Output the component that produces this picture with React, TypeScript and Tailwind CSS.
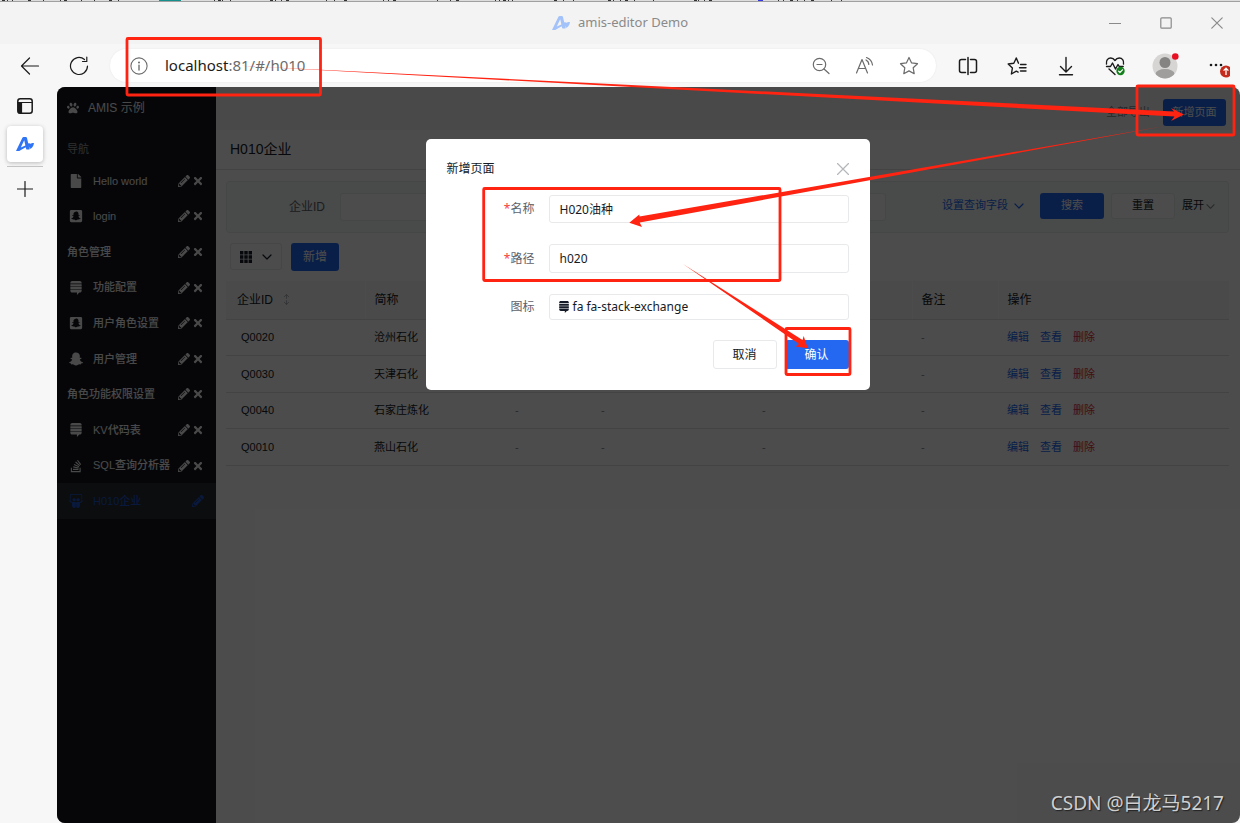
import React from 'react';
import {
  FaPaw,
  FaFile,
  FaSnapchatSquare,
  FaSnapchatGhost,
  FaStackExchange,
  FaStackOverflow,
  FaSlideshare,
  FaPencilAlt,
  FaTimes,
} from 'react-icons/fa';

const UI_FONT = "font-['Noto_Sans','Noto_Sans_CJK_SC',sans-serif]";
const PAGE_FONT = "font-['Liberation_Sans','Noto_Sans_CJK_SC',sans-serif]";

type NavItem = { label: string; icon?: React.ComponentType<{ className?: string }>; active?: boolean };

const NAV: NavItem[] = [
  { label: 'Hello world', icon: FaFile },
  { label: 'login', icon: FaSnapchatSquare },
  { label: '角色管理' },
  { label: '功能配置', icon: FaStackExchange },
  { label: '用户角色设置', icon: FaSnapchatSquare },
  { label: '用户管理', icon: FaSnapchatGhost },
  { label: '角色功能权限设置' },
  { label: 'KV代码表', icon: FaStackExchange },
  { label: 'SQL查询分析器', icon: FaStackOverflow },
  { label: 'H010企业', icon: FaSlideshare, active: true },
];

const ROWS = [
  ['Q0020', '沧州石化'],
  ['Q0030', '天津石化'],
  ['Q0040', '石家庄炼化'],
  ['Q0010', '燕山石化'],
];

const STRIP = [
  2, 7, 12, 28, 43, 60, 64, 81, 94, 109, 118, 214, 218, 222, 230, 270, 275, 281, 286, 326, 334, 344, 383, 388, 393,
  437, 450, 456, 495, 499, 503, 508, 512, 554, 563, 573, 608, 613, 620, 625, 634, 653, 694, 698, 704, 709, 778, 783,
  790, 797, 804, 811, 831, 841,
];

function Logo({ className }: { className?: string }) {
  return (
    <svg viewBox="0 0 18 15" className={className} fill="currentColor" aria-hidden="true">
      <path
        fillRule="evenodd"
        d="M0 14 6.400.8C6.700.2 7.100 0 7.700 0h2.100c.7 0 1 .3 1.200.9L13.600 12.500h-3.200l-.7-2.200L3.200 14H0Zm8.200-10.800L4.800 10.500l4.600-2.100-1.200-5.200Z"
      />
      <path d="M10.800 7.800c1.200-1.800 2.600-2 3.800-1C15.800 5.800 17 5.800 18 6.300c-.5 3-2 5-4.300 5.700-.2-2-1.200-3.300-2.900-4.200Z" />
    </svg>
  );
}

function Line({ children, className, w = 20 }: { children: React.ReactNode; className?: string; w?: number }) {
  return (
    <svg
      viewBox={`0 0 ${w} ${w}`}
      className={className}
      fill="none"
      stroke="currentColor"
      strokeWidth="1.2"
      strokeLinecap="round"
      strokeLinejoin="round"
      aria-hidden="true"
    >
      {children}
    </svg>
  );
}

function Chevron({ className }: { className?: string }) {
  return (
    <Line w={10} className={className}>
      <path d="m1 3 4 4 4-4" />
    </Line>
  );
}

const STAR = 'm10 1.500 2.600 5.400 5.900.8-4.300 4.100 1 5.900L10 14.900l-5.200 2.800 1-5.900L1.500 7.700l5.900-.8Z';

function TitleBar() {
  return (
    <header className="grid h-[42px] shrink-0 grid-cols-[1fr_auto_1fr] items-center bg-[#f3f3f3]">
      <span />
      <div className="flex items-center gap-2 text-[13px] text-[#8a8a8a]">
        <Logo className="w-[18px] text-[#a3c2fa]" />
        <h1>amis-editor Demo</h1>
      </div>
      <div className="flex justify-end gap-[5px] text-[#8a8a8a]">
        <button aria-label="最小化" className="flex w-[46px] justify-center">
          <Line w={12} className="size-3"><path d="M.5 6.500h11" /></Line>
        </button>
        <button aria-label="最大化" className="flex w-[46px] justify-center">
          <Line w={12} className="size-3"><rect x=".8" y=".8" width="10.400" height="10.400" rx="1" /></Line>
        </button>
        <button aria-label="关闭" className="flex w-[46px] justify-center">
          <Line w={12} className="size-3"><path d="m.8.8 10.400 10.400M11.200.8.8 11.200" /></Line>
        </button>
      </div>
    </header>
  );
}

function Toolbar() {
  return (
    <div className="flex h-[43px] shrink-0 items-center bg-[#f7f7f7] text-[#1b1b1b]">
      <div className="flex w-[110px] items-center gap-[29px] pl-5">
        <button aria-label="后退">
          <Line className="size-5"><path d="M18.500 10H1.500M9.500 2 1.500 10l8 8" /></Line>
        </button>
        <button aria-label="刷新">
          <Line className="size-5"><path d="M18.500 10A8.500 8.500 0 1 1 15.500 3.500M17.800 1.200v4.300h-4.300" /></Line>
        </button>
      </div>
      <div className="flex h-[33px] flex-1 items-center rounded-full bg-white pr-[17px] pl-5 text-[#6b6b6b] shadow-[0_0_2px_rgba(0,0,0,0.08)]">
        <Line className="size-[18px]">
          <circle cx="10" cy="10" r="9" />
          <path d="M10 9v5.500" strokeWidth="1.500" />
          <circle cx="10" cy="6" r=".5" fill="currentColor" />
        </Line>
        <div className="flex-1 pl-[17px] text-[15px]">
          <span className="text-[#1b1b1b]">localhost</span>:81/#/h010
        </div>
        <div className="flex gap-6">
          <button aria-label="缩小">
            <Line className="size-5"><circle cx="8.500" cy="8.500" r="6.200" /><path d="M6 8.500h5M13 13l5 4.500" /></Line>
          </button>
          <button aria-label="朗读">
            <Line className="size-5">
              <path d="M1.500 17 7 3.500 12.500 17M3.500 12.500h7M11 4c1.800 1 2.800 2.500 2.800 4.500M11.500 1.500C15 2.800 17 5 17.500 9" />
            </Line>
          </button>
          <button aria-label="收藏">
            <Line className="size-5"><path d={STAR} /></Line>
          </button>
        </div>
      </div>
      <div className="ml-[7px] flex">
        <button aria-label="分屏" className="flex w-[49px] items-center justify-center">
          <Line className="size-5">
            <path d="M7.500 3.500h-4C2.500 3.500 1.500 4.500 1.500 5.500v9c0 1 1 2 2 2h4M12.500 3.500h4c1 0 2 1 2 2v9c0 1-1 2-2 2h-4M10 1.500v17" strokeWidth="1.500" />
          </Line>
        </button>
        <button aria-label="收藏夹" className="flex w-[49px] items-center justify-center">
          <Line className="size-5">
            <path d="M11.500 7.200 9.300 2 6.800 7.200 1.200 8l4.200 4-1 6 4.900-2.800 1.800.9M13.500 8.500h5.500M12.500 11.800H19M13.500 15h5.500" strokeWidth="1.400" />
          </Line>
        </button>
        <button aria-label="下载" className="flex w-[49px] items-center justify-center">
          <Line className="size-5"><path d="M10 1.500v14M4.500 10.500l5.500 5.500 5.500-5.500M3.500 18.800h13" strokeWidth="1.400" /></Line>
        </button>
        <button aria-label="浏览器概要" className="flex w-[49px] items-center justify-center">
          <Line className="size-5">
            <path d="M1.500 8C.8 4.500 3 2 5.700 2 7.600 2 9 3 10 4.500 11 3 12.400 2 14.300 2 17 2 19.200 4.500 18.500 8M1.500 10.500h4L7.500 7l3 6L13 8.500l1.200 2h4M4 13l6 5.500" strokeWidth="1.400" />
            <circle cx="15.500" cy="15" r="4.200" fill="#13801c" stroke="none" />
            <path d="m13.600 15.200 1.300 1.300 2.600-2.700" stroke="#fff" />
          </Line>
        </button>
        <button aria-label="个人资料" className="flex w-[52px] items-center justify-center">
          <svg viewBox="0 0 28 28" className="size-7" aria-hidden="true">
            <clipPath id="face"><circle cx="14" cy="14" r="12.500" /></clipPath>
            <circle cx="14" cy="14" r="12.500" fill="#d7d5d3" />
            <circle cx="14" cy="10.500" r="5.500" fill="#858482" />
            <ellipse cx="14" cy="22" rx="9.500" ry="5" fill="#a09e9c" clipPath="url(#face)" />
            <circle cx="24.300" cy="4.500" r="3.300" fill="#e81123" />
          </svg>
        </button>
        <button aria-label="更多" className="flex w-[49px] items-center justify-center">
          <svg viewBox="0 0 28 24" className="h-6 w-7" aria-hidden="true">
            <g fill="#1b1b1b"><circle cx="9" cy="11" r="1.300" /><circle cx="14" cy="11" r="1.300" /><circle cx="19" cy="11" r="1.300" /></g>
            <circle cx="24" cy="17.500" r="6" fill="#c42b1c" />
            <path d="M24 21v-6.500M21.600 16.600l2.400-2.400 2.400 2.400" fill="none" stroke="#fff" strokeWidth="1.300" />
          </svg>
        </button>
      </div>
    </div>
  );
}

function Rail() {
  return (
    <aside className="flex w-[57px] shrink-0 flex-col items-start bg-[#f7f7f7] pt-[11px] pl-[7px] text-[#1b1b1b]">
      <button aria-label="标签页" className="flex w-9 justify-center">
        <Line w={16} className="size-4">
          <rect x=".8" y=".8" width="14.400" height="14.400" rx="2.500" strokeWidth="1.500" />
          <path d="M1 4.500h14" />
          <path d="M1.500 4.500h3v10.500h-2a1 1 0 0 1-1-1Z" fill="currentColor" />
        </Line>
      </button>
      <button aria-label="amis-editor Demo" className="mt-3 flex h-9 w-9 items-center justify-center rounded-[4px] bg-white shadow-[0_1px_4px_rgba(0,0,0,0.25)]">
        <Logo className="w-[18px] text-[#2e74f5]" />
      </button>
      <hr className="mt-[4px] w-9 border-[#c4c4c4]" />
      <button aria-label="新建标签页" className="mt-[14px] flex w-9 justify-center">
        <Line w={16} className="size-4"><path d="M8 .5v15M.5 8h15" /></Line>
      </button>
    </aside>
  );
}

function Sidebar() {
  return (
    <nav className="w-[159px] shrink-0 bg-[#14171f] text-[#f4f4f4]">
      <div className="flex h-[41px] items-center gap-[9px] pl-[10px] text-[12px]">
        <FaPaw className="size-3" />
        <span>AMIS 示例</span>
      </div>
      <div className="flex h-[35px] items-end pl-[10px] text-[11px] leading-[28px] text-[#9a9b9f]">导航</div>
      <ul className="grid h-[356px] auto-rows-fr text-[11px] font-medium">
        {NAV.map(({ label, icon: Icon, active }) => (
          <li
            key={label}
            className={
              active
                ? 'flex items-center bg-[#292c31] pr-3 pl-[10px] text-[#1f55cc]'
                : 'flex items-center pr-3 pl-[10px]'
            }
          >
            <a href="#/h010" className="flex flex-1 items-center whitespace-nowrap">
              {Icon && (
                <span className="flex w-[26px] pl-[2px]">
                  <Icon className="size-[14px]" />
                </span>
              )}
              {label}
            </a>
            <span className="flex items-center gap-[2px]">
              <button aria-label={`编辑 ${label}`}><FaPencilAlt className="size-3" /></button>
              {!active && <button aria-label={`删除 ${label}`}><FaTimes className="size-3" /></button>}
            </span>
          </li>
        ))}
      </ul>
    </nav>
  );
}

const CELL = 'border-b border-[#e0e2e5] px-[9px] font-normal';

function PageBody() {
  return (
    <main className="min-w-0 flex-1 bg-white text-[#151b26]">
      <div className="flex h-[43px] items-center justify-end bg-[#f6f6f6] pt-2 pr-[14px]">
        <button className="mr-[5px] h-[27px] px-2 text-[11px] text-[#84868c]">全部导出</button>
        <button className="h-[27px] w-[63px] rounded-[3px] bg-[#2468f2] text-[11px] text-white">新增页面</button>
      </div>
      <h2 className="flex h-[40px] items-center border-b border-[#e0e2e5] pl-[14px] text-[14px]">H010企业</h2>

      <div className="mt-[11px] mr-[11px] ml-[10px]">
        <form className="flex h-[52px] items-center rounded-[3px] border border-[#e8edeb] bg-[#f3f9f7] pr-[13px] text-[11px]">
          <label htmlFor="qid" className="w-[98px] text-right text-[12px] text-[#5e626a]">企业ID</label>
          <input id="qid" className="ml-[15px] h-[28px] max-w-[546px] min-w-0 flex-1 rounded-[3px] border border-[#e8e9eb] bg-white px-2" />
          <div className="ml-auto flex items-center pb-[3px]">
            <button type="button" className="mr-4 flex items-center gap-[6px] text-[#2468f2]">
              设置查询字段
              <Chevron className="size-[10px]" />
            </button>
            <button type="button" className="h-[26px] w-16 rounded-[3px] bg-[#2468f2] text-white">搜索</button>
            <button type="button" className="ml-[7px] h-[26px] w-16 rounded-[3px] border border-[#e8e9eb] bg-white">重置</button>
            <button type="button" className="ml-[7px] flex items-center gap-[2px]">
              展开
              <Chevron className="mt-[2px] size-[9px] text-[#84868c]" />
            </button>
          </div>
        </form>

        <div className="mt-[10px] flex items-start gap-[9px] pl-1">
          <button aria-label="列设置" className="flex h-[27px] w-[52px] items-center justify-center gap-[10px] rounded-[3px] border border-[#e8e9eb]">
            <svg viewBox="0 0 12 12" className="size-3" fill="currentColor" aria-hidden="true">
              <path d="M0 0h3.400v3.400H0zM4.300 0h3.400v3.400H4.300zM8.600 0H12v3.400H8.600zM0 4.300h3.400v3.400H0zM4.300 4.300h3.400v3.400H4.300zM8.600 4.300H12v3.400H8.600zM0 8.600h3.400V12H0zM4.300 8.600h3.400V12H4.300zM8.600 8.600H12V12H8.600z" />
            </svg>
            <Chevron className="size-[10px]" />
          </button>
          <button className="h-[28px] w-12 rounded-[3px] bg-[#2468f2] text-[12px] text-white">新增</button>
        </div>

        <table className="mt-[10px] h-[185px] w-full table-fixed border-collapse text-left text-[11px]">
          <colgroup>
            <col className="w-[139px]" />
            <col className="w-[141px]" />
            <col className="w-[86px]" />
            <col className="w-[161px]" />
            <col className="w-[159px]" />
            <col className="w-[86px]" />
            <col />
          </colgroup>
          <thead className="bg-[#f7f7f9] text-[12px]">
            <tr className="h-[38px]">
              <th className={`${CELL} border-r border-r-[#fefefe] pl-[11px]`}>
                <span className="flex items-center gap-[8px]">
                  企业ID
                  <Line w={10} className="size-[11px] text-[#a8abb1]">
                    <path d="M5 .5V4M3 2.500 5 .5l2 2M5 6v3.500M3 7.500l2 2 2-2" strokeWidth=".8" />
                  </Line>
                </span>
              </th>
              <th className={CELL}>简称</th>
              <th className={CELL} />
              <th className={CELL} />
              <th className={`${CELL} border-r border-r-[#fefefe]`} />
              <th className={`${CELL} border-r border-r-[#fefefe]`}>备注</th>
              <th className={CELL}>操作</th>
            </tr>
          </thead>
          <tbody>
            {ROWS.map(([id, name]) => (
              <tr key={id} className="h-9">
                <td className={`${CELL} pl-[15px]`}>{id}</td>
                <td className={CELL}>{name}</td>
                <td className={`${CELL} text-[#84868c]`}>-</td>
                <td className={`${CELL} text-[#84868c]`}>-</td>
                <td className={`${CELL} text-[#84868c]`}>-</td>
                <td className={`${CELL} text-[#84868c]`}>-</td>
                <td className={CELL}>
                  <span className="flex gap-[11px] text-[#2468f2]">
                    <button>编辑</button>
                    <button>查看</button>
                    <button className="text-[#e0303a]">删除</button>
                  </span>
                </td>
              </tr>
            ))}
          </tbody>
        </table>
      </div>
    </main>
  );
}

const FIELD = 'w-[300px] rounded-[3px] border border-[#e8e9eb] bg-white';
const LABEL = 'w-[88px] text-right text-[#5e626a]';

function Dialog() {
  return (
    <div className={`absolute inset-0 flex items-start justify-center bg-black/70 pt-[52px] pr-[2px] ${UI_FONT}`}>
      <div role="dialog" aria-label="新增页面" className="w-[444px] rounded-[5px] bg-white px-[21px] pt-5 pb-[21px] text-[12px] text-[#151b26]">
        <div className="flex h-5 items-center justify-between">
          <h3>新增页面</h3>
          <button aria-label="关闭" className="text-[#b4b6ba]">
            <Line w={12} className="size-3"><path d="m.5.5 11 11m0-11-11 11" /></Line>
          </button>
        </div>
        <div className="mt-4 flex flex-col gap-[21px]">
          <div className="flex items-center gap-[14px]">
            <label htmlFor="name" className={LABEL}><span className="text-[#f33e3e]">*</span>名称</label>
            <input id="name" defaultValue="H020油种" className={`${FIELD} h-[28px] px-[10px]`} />
          </div>
          <div className="flex items-center gap-[14px]">
            <label htmlFor="path" className={LABEL}><span className="text-[#f33e3e]">*</span>路径</label>
            <input id="path" defaultValue="h020" className={`${FIELD} h-[29px] px-[10px]`} />
          </div>
          <div className="flex items-center gap-[14px]">
            <span id="icon-label" className={LABEL}>图标</span>
            <button aria-labelledby="icon-label" className={`${FIELD} flex h-[26px] items-center gap-[3px] px-2`}>
              <FaStackExchange className="size-3" />
              fa fa-stack-exchange
            </button>
          </div>
        </div>
        <div className="mt-5 flex justify-end gap-2">
          <button className="h-[29px] w-16 rounded-[3px] border border-[#e8e9eb]">取消</button>
          <button className="h-[29px] w-16 rounded-[3px] bg-[#2468f2] text-white">确认</button>
        </div>
      </div>
    </div>
  );
}

function Annotations() {
  return (
    <svg className="pointer-events-none absolute top-0 left-0 h-[823px] w-[1240px]" viewBox="0 0 1240 823" aria-hidden="true">
      <g fill="none" stroke="#ff2312" strokeWidth="2.800">
        <rect x="127" y="38.500" width="193.500" height="56.500" rx="1" />
        <rect x="1137" y="86" width="97" height="49" rx="1" />
        <rect x="483.700" y="188.500" width="296.300" height="92" rx="1" />
        <rect x="786" y="328.500" width="64" height="46" rx="1" />
      </g>
      <g fill="#ff2312">
        <path d="m240 65.800 934 45.700-3-3.500 13 6.500-13 6.500 3.500-4.500Z" />
        <path d="m1165 126-525.500 90.500-.2-2-10 8.200 12.700 4.300-2.300-4.500Z" />
        <path d="m683 264 119.500 76 1.200-4 4 12.300-12.400-1.800 3.700-2.500Z" />
      </g>
    </svg>
  );
}

export default function App() {
  return (
    <div className={`relative flex min-h-screen flex-col overflow-hidden bg-[#f7f7f7] ${UI_FONT}`}>
      <svg className="h-[2px] w-full shrink-0 bg-[#dcdcdc]" aria-hidden="true">
        {STRIP.map((x, i) => (
          <rect key={x} x={x} y="0" width={i % 3 === 0 ? 3 : 1} height="1" fill="#333" />
        ))}
        <rect x="159" width="22" height="1" fill="#16908d" />
        <rect x="758" width="5" height="1" fill="#3838e0" />
        <rect y="1" width="100%" height="1" fill="#a0a0a0" />
      </svg>
      <TitleBar />
      <Toolbar />
      <div className="flex flex-1">
        <Rail />
        <div className={`relative flex min-w-0 flex-1 overflow-hidden rounded-[8px] ${PAGE_FONT}`}>
          <Sidebar />
          <PageBody />
          <Dialog />
        </div>
      </div>
      <Annotations />
      <div className="absolute right-4 bottom-[6px] text-[19px] leading-7 text-[#cfcfcf] [text-shadow:1px_1px_1px_#222]">CSDN @白龙马5217</div>
    </div>
  );
}
